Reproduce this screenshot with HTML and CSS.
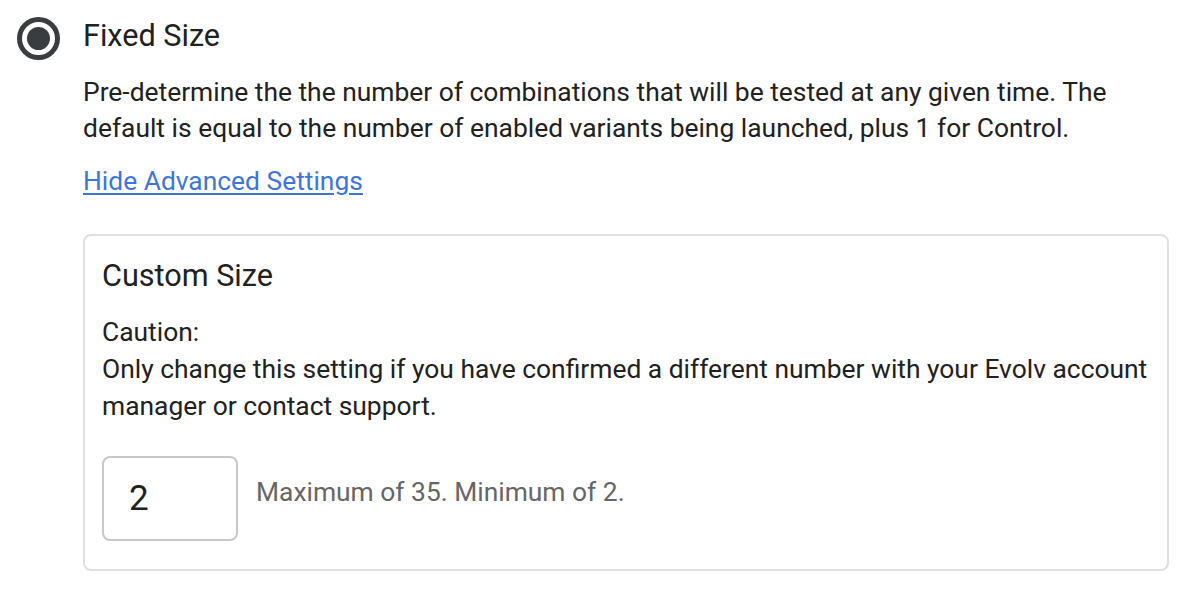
FILE: index.html
```html
<!DOCTYPE html>
<html lang="en">
<head>
  <meta charset="UTF-8">
  <meta name="viewport" content="width=device-width, initial-scale=1.0">
  <title>Fixed Size - Settings</title>
  <link rel="stylesheet" href="styles.css">
</head>
<body>
  <div class="option">
    <label class="option-header">
      <span class="radio"><span class="radio-dot"></span></span>
      <span class="option-title">Fixed Size</span>
    </label>
    <div class="option-body">
      <p class="description">Pre-determine the the number of combinations that will be tested at any given time. The default is equal to the number of enabled variants being launched, plus 1 for Control.</p>
      <a href="#" class="toggle-link">Hide Advanced Settings</a>

      <div class="advanced">
        <h2>Custom Size</h2>
        <p class="caution">Caution:<br>Only change this setting if you have confirmed a different number with your Evolv account manager or contact support.</p>
        <div class="size-row">
          <input type="text" class="size-input" value="2">
          <span class="hint">Maximum of 35. Minimum of 2.</span>
        </div>
      </div>
    </div>
  </div>
</body>
</html>
```

FILE: styles.css
```css
body {
  font-family: Roboto, 'Noto Sans', sans-serif;
  margin: 0;
  padding: 0;
  background: #fff;
  color: #212121;
}
.option {
  padding: 18px 0 0 17px;
}
.option-header {
  display: flex;
  align-items: flex-start;
  gap: 23px;
}
.radio {
  width: 43px;
  height: 43px;
  margin-top: -1px;
  box-sizing: border-box;
  border: 5px solid #3a3d40;
  border-radius: 50%;
  display: flex;
  align-items: center;
  justify-content: center;
}
.radio-dot {
  width: 23px;
  height: 23px;
  border-radius: 50%;
  background: #3a3d40;
}
.option-title {
  font-size: 30.6px;
  line-height: 36px;
}
.option-body {
  margin-left: 66px;
}
.description {
  font-size: 26.4px;
  line-height: 36px;
  margin: 14px 0 17px;
  max-width: 1060px;
}
.toggle-link {
  display: block;
  width: max-content;
  font-size: 26.4px;
  line-height: 36px;
  color: #3e76d8;
  text-decoration: underline;
  text-underline-offset: 3px;
}
.advanced {
  margin-top: 35px;
  width: 1086px;
  box-sizing: border-box;
  border: 2px solid #e0e0e0;
  border-radius: 8px;
  padding: 22px 17px 28px;
}
.advanced h2 {
  font-size: 30.6px;
  font-weight: 400;
  line-height: 36px;
  margin: 0 0 20px;
}
.caution {
  font-size: 26.4px;
  line-height: 37px;
  margin: 0 0 31px;
}
.size-row {
  display: flex;
  align-items: center;
  gap: 18px;
}
.size-input {
  width: 136px;
  height: 85px;
  box-sizing: border-box;
  border: 2px solid #c8c8c8;
  border-radius: 8px;
  padding: 0 25px;
  font-family: Roboto, sans-serif;
  font-size: 35px;
  color: #212121;
  margin: 0;
}
.hint {
  font-size: 26.4px;
  color: #666;
  margin-top: -14px;
}
```
